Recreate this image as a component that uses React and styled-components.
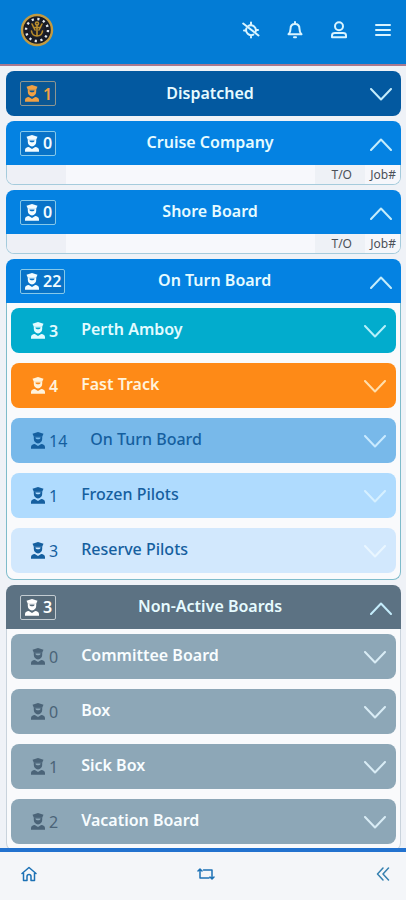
import React from "react";
import styled, { createGlobalStyle } from "styled-components";

const GlobalStyle = createGlobalStyle`
  * { box-sizing: border-box; }
  body {
    margin: 0;
    background: #eff2f7;
    font-family: "Noto Sans", "Open Sans", sans-serif;
  }
  button { font: inherit; }
`;

const Page = styled.div`
  display: flex;
  flex-direction: column;
  height: 100vh;
`;

const TopBar = styled.header`
  display: flex;
  flex: none;
  align-items: center;
  justify-content: space-between;
  padding: 12px 11px 16px 20px;
  background: #037cd5;
  border-bottom: 2px solid #a9798f;
`;

const HomeLink = styled.a`
  display: flex;
`;

const TopActions = styled.nav`
  display: flex;
  gap: 20px;
`;

const IconButton = styled.button`
  display: flex;
  align-items: center;
  justify-content: center;
  width: 24px;
  height: 36px;
  padding: 0;
  border: 0;
  background: none;
  color: ${(p) => p.$color || "#d9f4ff"};
  cursor: pointer;
`;

const Boards = styled.main`
  display: flex;
  flex: 1;
  flex-direction: column;
  gap: 5px;
  min-height: 0;
  padding: 5px 5px 0 6px;
  overflow-y: auto;
  scrollbar-width: none;
`;

const Board = styled.section`
  flex: none;
`;

const BoardHeader = styled.button`
  display: flex;
  align-items: center;
  width: 100%;
  height: ${(p) => (p.$closed ? 45 : 44)}px;
  padding: 0 9px 0 14px;
  border: 0;
  border-radius: ${(p) => (p.$closed ? "8px" : "8px 8px 0 0")};
  background: ${(p) => p.$bg};
  color: #ffffff;
  cursor: pointer;
`;

const Badge = styled.span`
  display: flex;
  align-items: center;
  gap: 4px;
  height: 25px;
  padding: 0 3px 0 4px;
  border: 1px solid ${(p) => p.$line};
  border-radius: 2px;
  background: ${(p) => p.$bg};
  color: ${(p) => p.$color};
  font-size: 16px;
  font-weight: 600;
  line-height: 24px;
`;

const BoardTitle = styled.span`
  flex: 1;
  padding-bottom: 2px;
  color: #e6fbff;
  font-size: 16px;
  font-weight: 600;
  line-height: 24px;
  text-align: center;
`;

const Toggle = styled.span`
  display: flex;
  justify-content: flex-end;
  width: 28px;
  padding-top: 2px;
  color: ${(p) => p.$color || "#c4ecfb"};
`;

const BoardBody = styled.div`
  overflow: hidden;
  border: solid ${(p) => p.$line};
  border-width: 0 1px 1px;
  border-radius: 0 0 8px 8px;
  background: #f9fafc;
`;

const RowList = styled.div`
  display: flex;
  flex-direction: column;
  gap: 10px;
  padding: 5px 4px 6px;
`;

const Row = styled.button`
  display: flex;
  align-items: center;
  height: 45px;
  padding: 0 10px 0 20px;
  border: 0;
  border-radius: 8px;
  background: ${(p) => p.$bg};
  color: ${(p) => p.$color};
  cursor: pointer;
`;

const RowCount = styled.span`
  display: flex;
  align-items: center;
  gap: 4px;
  color: ${(p) => p.$color};
  font-size: 16px;
  font-weight: ${(p) => p.$weight};
  line-height: 24px;
`;

const RowTitle = styled.span`
  flex: 1;
  padding: 0 0 4px 23px;
  font-size: 16px;
  font-weight: ${(p) => p.$weight};
  line-height: 24px;
  text-align: left;
`;

const JobTable = styled.table`
  width: 100%;
  border-collapse: collapse;
  table-layout: fixed;
`;

const JobHead = styled.th`
  width: ${(p) => p.$width || "auto"};
  height: 19px;
  padding: 0 4px 0 0;
  background: ${(p) => p.$bg};
  color: #4b5058;
  font-size: 12px;
  font-weight: 400;
  line-height: 18px;
  text-align: right;
`;

const TurnOffHead = styled(JobHead)`
  padding-right: 13px;
`;

const BottomBar = styled.nav`
  display: flex;
  flex: none;
  align-items: center;
  justify-content: space-between;
  height: 52px;
  padding: 0 11px 4px 17px;
  border-top: 4px solid #2272cf;
  background: #f4f6f9;
`;

const Svg = ({ width, height, viewBox, children, stroke = 2 }) => (
  <svg
    width={width}
    height={height}
    viewBox={viewBox || `0 0 ${width} ${height}`}
    fill="none"
    stroke="currentColor"
    strokeWidth={stroke}
    strokeLinecap="round"
    strokeLinejoin="round"
    aria-hidden="true"
  >
    {children}
  </svg>
);

const PilotIcon = ({ face }) => (
  <svg width="14" height="17" viewBox="0 0 14 17" fill="currentColor" aria-hidden="true">
    <path d="M7 0 12.500 1.800 11.200 4.800H2.800L1.500 1.800Z" />
    <path d="M2.800 4.600h8.400v2.200C11.200 9.600 9.300 11.400 7 11.400S2.800 9.600 2.800 6.800Z" />
    <path d="M4.400 5.600h5.200C9.400 6.900 8.800 7.200 8 7.200H6c-.8 0-1.400-.3-1.600-1.600Z" fill={face} />
    <path d="M0 16.800v-1.600c0-2 1.500-3.100 3.800-3.200L7 14l3.200-2c2.300.1 3.800 1.200 3.800 3.200v1.600Z" />
  </svg>
);

const Chevron = ({ up }) => (
  <Svg width={22} height={13} stroke={2}>
    <path d={up ? "M1 12 11 1.500 21 12" : "M1 1 11 11.500 21 1"} />
  </Svg>
);

const SealLogo = () => (
  <svg width="34" height="36" viewBox="0 0 34 36" role="img" aria-label="Pilots home">
    <circle cx="17" cy="18" r="15" fill="#171a25" stroke="#c19a42" strokeWidth="2.400" />
    <circle cx="17" cy="18" r="11" fill="none" stroke="#e4e8ec" strokeWidth="2.400" strokeDasharray="2.200 3.560" />
    <circle cx="17" cy="18" r="8" fill="#20212a" />
    <g fill="none" stroke="#b98d2c" strokeWidth="1.600" strokeLinecap="round">
      <circle cx="17" cy="11.500" r="1.500" />
      <path d="M17 13v11M13.500 15.500h7M11.500 19c.5 3.500 2.500 5 5.500 5s5-1.500 5.500-5M12 12l3 6M22 12l-3 6" />
    </g>
  </svg>
);

const LocationOffIcon = () => (
  <Svg width={18} height={18}>
    <path d="M1.200 2.500 16.500 14.500" />
    <path d="M4.500 7.200a5 5 0 0 0 6.800 6.400M6.500 4.800a5 5 0 0 1 7 6.200M9 1.500v2.300M9 14.300v2.200M2 9.500h2M14 9h2" />
  </Svg>
);

const BellIcon = () => (
  <Svg width={16} height={18}>
    <path d="M8 1v1.500M1.500 13.300c1.500-1.500 2-2.800 2-5.400C3.500 4.800 5.400 3 8 3s4.500 1.800 4.500 4.900c0 2.600.5 3.900 2 5.400ZM7 16.300h2" />
  </Svg>
);

const UserIcon = () => (
  <Svg width={16} height={18}>
    <circle cx="8" cy="5.300" r="4" />
    <path d="M4 12h8c1.800 0 3 1 3 2.400v1.900H1v-1.900C1 13 2.200 12 4 12Z" />
  </Svg>
);

const MenuIcon = () => (
  <Svg width={16} height={14}>
    <path d="M1 2h14M1 7h14M1 12h14" />
  </Svg>
);

const HouseIcon = () => (
  <Svg width={16} height={16} stroke={1.500}>
    <path d="M1 7.500 8 1.500l7 6M2.500 7v7.500H6V10.500a2 2 0 0 1 4 0v4h3.500V7" />
  </Svg>
);

const RepeatIcon = () => (
  <Svg width={18} height={14} stroke={1.500}>
    <path d="M1 4 3 2l2 2M3 2.500V11h9M6.500 3H15v8.500M13 10l2 2 2-2" />
  </Svg>
);

const DoubleLeftIcon = () => (
  <Svg width={14} height={14} stroke={1.500}>
    <path d="M7 1 1.500 7 7 13M12.500 1 7 7l5.500 6" />
  </Svg>
);

const BLUE = "#0482e2";

const BLUE_BADGE = { bg: "#0873c8", line: "#86c9ea", color: "#f2fcff" };

const boards = [
  {
    title: "Dispatched",
    count: 1,
    bg: "#0359a0",
    badge: { bg: "#0b5794", line: "#8e9691", color: "#f1a043" },
  },
  { title: "Cruise Company", count: 0, bg: BLUE, badge: BLUE_BADGE, jobs: true, line: "#a5cbdc" },
  { title: "Shore Board", count: 0, bg: BLUE, badge: BLUE_BADGE, jobs: true, line: "#a5cbdc" },
  {
    title: "On Turn Board",
    count: 22,
    bg: BLUE,
    badge: BLUE_BADGE,
    line: "#7fbccb",
    rows: [
      { title: "Perth Amboy", count: 3, bg: "#02accd", color: "#e2fbff", chevron: "#b5f0fa", bold: true },
      { title: "Fast Track", count: 4, bg: "#fe8a17", color: "#fff3dc", chevron: "#ffdfad", bold: true },
      { title: "On Turn Board", count: 14, bg: "#78b9ea", color: "#155f9f", chevron: "#c9eaff" },
      { title: "Frozen Pilots", count: 1, bg: "#afdbfe", color: "#155f9f", chevron: "#d6f0ff" },
      { title: "Reserve Pilots", count: 3, bg: "#d2e8fd", color: "#155f9f", chevron: "#e9f6ff" },
    ],
  },
  {
    title: "Non-Active Boards",
    count: 3,
    bg: "#5c7283",
    badge: { bg: "#566a79", line: "#c3ccd2", color: "#ffffff" },
    line: "#c9d3dc",
    rows: ["Committee Board", "Box", "Sick Box", "Vacation Board"].map((title, i) => ({
      title,
      count: [0, 0, 1, 2][i],
      bg: "#8da7b7",
      color: "#f8fdff",
      countColor: "#4b6478",
      chevron: "#d9ecf5",
      bold: true,
    })),
  },
];

const PilotRow = ({ row }) => (
  <Row type="button" $bg={row.bg} $color={row.color}>
    <RowCount $color={row.countColor || row.color} $weight={row.bold && !row.countColor ? 600 : 400}>
      <PilotIcon face={row.bg} />
      {row.count}
    </RowCount>
    <RowTitle $weight={row.bold ? 600 : 500}>{row.title}</RowTitle>
    <Toggle $color={row.chevron}>
      <Chevron />
    </Toggle>
  </Row>
);

const JobColumns = () => (
  <JobTable>
    <thead>
      <tr>
        <JobHead $width="15%" $bg="#eef0f6" />
        <JobHead $bg="#f7f8fc" />
        <TurnOffHead $width="50px" $bg="#eef1f6" scope="col">T/O</TurnOffHead>
        <JobHead $width="35px" $bg="#f6f7fb" scope="col">Job#</JobHead>
      </tr>
    </thead>
  </JobTable>
);

export default function App() {
  return (
    <Page>
      <GlobalStyle />
      <TopBar>
        <HomeLink href="#home">
          <SealLogo />
        </HomeLink>
        <TopActions aria-label="Account">
          <IconButton type="button" aria-label="Location off"><LocationOffIcon /></IconButton>
          <IconButton type="button" aria-label="Notifications"><BellIcon /></IconButton>
          <IconButton type="button" aria-label="Profile"><UserIcon /></IconButton>
          <IconButton type="button" aria-label="Menu"><MenuIcon /></IconButton>
        </TopActions>
      </TopBar>
      <Boards>
        {boards.map((board) => {
          const open = Boolean(board.jobs || board.rows);
          return (
            <Board key={board.title}>
              <BoardHeader type="button" aria-expanded={open} $bg={board.bg} $closed={!open}>
                <Badge $bg={board.badge.bg} $line={board.badge.line} $color={board.badge.color}>
                  <PilotIcon face={board.badge.bg} />
                  {board.count}
                </Badge>
                <BoardTitle>{board.title}</BoardTitle>
                <Toggle>
                  <Chevron up={open} />
                </Toggle>
              </BoardHeader>
              {open && (
                <BoardBody $line={board.line}>
                  {board.jobs && <JobColumns />}
                  {board.rows && (
                    <RowList>
                      {board.rows.map((row) => (
                        <PilotRow key={row.title} row={row} />
                      ))}
                    </RowList>
                  )}
                </BoardBody>
              )}
            </Board>
          );
        })}
      </Boards>
      <BottomBar aria-label="Main">
        <IconButton type="button" aria-label="Home" $color="#1c71b5"><HouseIcon /></IconButton>
        <IconButton type="button" aria-label="Switch" $color="#1c71b5"><RepeatIcon /></IconButton>
        <IconButton type="button" aria-label="Collapse" $color="#3580b0"><DoubleLeftIcon /></IconButton>
      </BottomBar>
    </Page>
  );
}
